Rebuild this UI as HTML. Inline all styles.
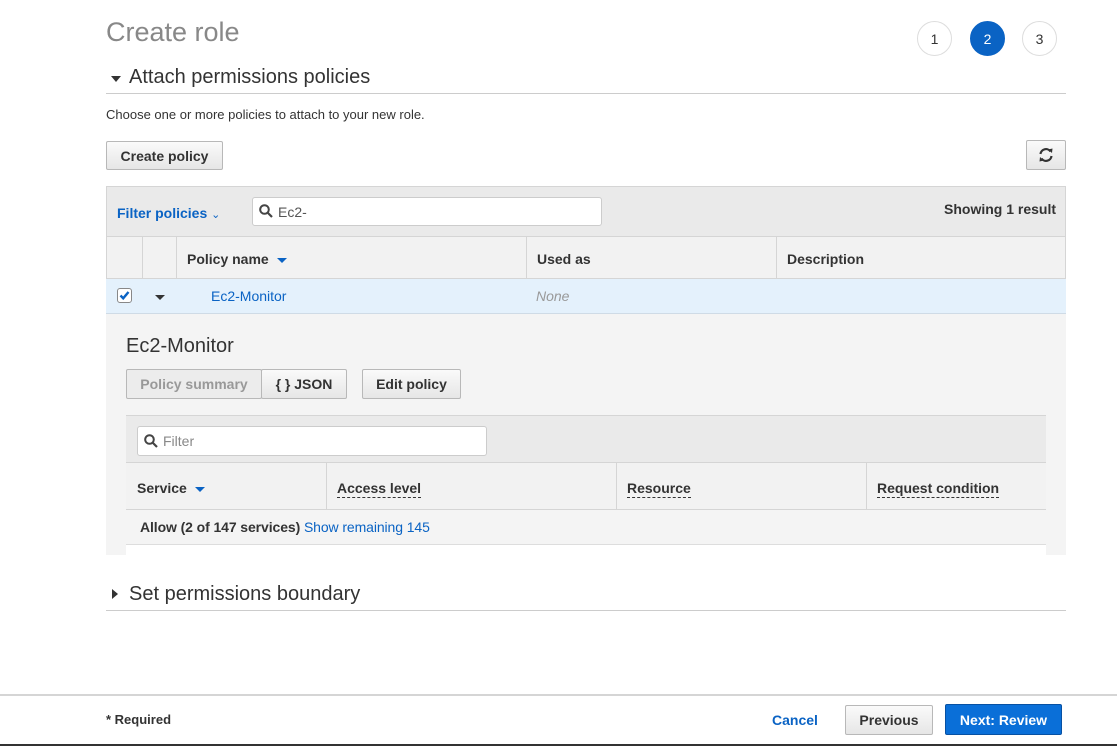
<!DOCTYPE html><html><head><style>
*{box-sizing:border-box;margin:0;padding:0}
body{width:1117px;height:746px;position:relative;background:#fff;font-family:"Liberation Sans",sans-serif;color:#333;overflow:hidden;font-size:13px}
.a{position:absolute}
.btn{position:absolute;border:1px solid #b8b8b8;border-radius:2px;background:linear-gradient(#fafafa,#e6e6e6);font-weight:bold;font-size:14px;color:#333;display:flex;align-items:center;justify-content:center}
.circ{position:absolute;width:35px;height:35px;border-radius:50%;border:1px solid #ddd;display:flex;align-items:center;justify-content:center;font-size:14px;top:21px}
.th{position:absolute;font-weight:bold;font-size:14px;color:#333}
.dot{border-bottom:1px dashed #333;padding-bottom:1px}
.vl{position:absolute;width:1px;background:#d5d5d5}
</style></head><body>
<div class="a" style="left:106px;top:17px;font-size:27px;color:#888">Create role</div>
<div class="circ" style="left:917px">1</div>
<div class="circ" style="left:970px;background:#0a63c4;border-color:#0a63c4;color:#fff">2</div>
<div class="circ" style="left:1022px">3</div>
<div class="a" style="left:111px;top:76px;width:0;height:0;border-left:5px solid transparent;border-right:5px solid transparent;border-top:6px solid #333"></div>
<div class="a" style="left:129px;top:66px;font-size:20px;color:#333">Attach permissions policies</div>
<div class="a" style="left:106px;top:93px;width:960px;height:1px;background:#ccc"></div>
<div class="a" style="left:106px;top:107px;font-size:13px">Choose one or more policies to attach to your new role.</div>
<div class="btn" style="left:106px;top:141px;width:117px;height:29px">Create policy</div>
<div class="btn" style="left:1026px;top:140px;width:40px;height:30px"><svg width="16" height="16" viewBox="0 0 16 16"><path d="M2.5 7A5.5 5.5 0 0 1 12.5 4.5M13.5 9A5.5 5.5 0 0 1 3.5 11.5" stroke="#333" stroke-width="2.2" fill="none"/><path d="M10 2.5L14.5 1.5L14 6Z M6 13.5L1.5 14.5L2 10Z" fill="#333"/></svg></div>
<div class="a" style="left:106px;top:186px;width:960px;height:51px;background:#eaeaea;border:1px solid #d5d5d5"></div>
<div class="a" style="left:117px;top:205px;color:#0a63c4;font-weight:bold;font-size:14px">Filter policies <span style="font-weight:normal;font-size:11px">&#8964;</span></div>
<div class="a" style="left:252px;top:197px;width:350px;height:29px;background:#fff;border:1px solid #ccc;border-radius:3px"></div>
<svg class="a" style="left:259px;top:204px" width="14" height="14" viewBox="0 0 14 14"><circle cx="5.5" cy="5.5" r="4.3" stroke="#444" stroke-width="2" fill="none"/><path d="M8.5 8.5L13 13" stroke="#444" stroke-width="2.2"/></svg>
<div class="a" style="left:278px;top:204px;font-size:14px;color:#555">Ec2-</div>
<div class="a" style="left:944px;top:201px;font-weight:bold;font-size:14px">Showing 1 result</div>
<div class="a" style="left:106px;top:237px;width:960px;height:42px;background:#f2f2f2;border:1px solid #d5d5d5;border-top:none"></div>
<div class="vl" style="left:142px;top:237px;height:42px"></div>
<div class="vl" style="left:176px;top:237px;height:42px"></div>
<div class="vl" style="left:526px;top:237px;height:42px"></div>
<div class="vl" style="left:776px;top:237px;height:42px"></div>
<div class="th" style="left:187px;top:251px">Policy name <span style="display:inline-block;margin-left:4px;border-left:5px solid transparent;border-right:5px solid transparent;border-top:5px solid #0a63c4;vertical-align:middle"></span></div>
<div class="th" style="left:537px;top:251px">Used as</div>
<div class="th" style="left:787px;top:251px">Description</div>
<div class="a" style="left:106px;top:279px;width:960px;height:35px;background:#e4f1fc;border-bottom:1px solid #cfdbe6"></div>
<div class="a" style="left:117px;top:288px;width:15px;height:15px;background:#fff;border:1px solid #888;border-radius:3px"><svg width="13" height="13" viewBox="0 0 13 13" style="display:block"><path d="M2.5 6.5L5.2 9.3L10.5 3" stroke="#0a63c4" stroke-width="2.4" fill="none"/></svg></div>
<div class="a" style="left:155px;top:295px;border-left:5px solid transparent;border-right:5px solid transparent;border-top:5px solid #333"></div>
<div class="a" style="left:211px;top:288px;color:#0a63c4;font-size:14px">Ec2-Monitor</div>
<div class="a" style="left:536px;top:288px;color:#999;font-style:italic;font-size:14px">None</div>
<div class="a" style="left:106px;top:314px;width:960px;height:241px;background:#f4f4f4"></div>
<div class="a" style="left:126px;top:335px;font-size:20px;color:#333">Ec2-Monitor</div>
<div class="btn" style="left:126px;top:369px;width:136px;height:30px;color:#999;background:#ececec">Policy summary</div>
<div class="btn" style="left:261px;top:369px;width:86px;height:30px">{ } JSON</div>
<div class="btn" style="left:362px;top:369px;width:99px;height:30px">Edit policy</div>
<div class="a" style="left:126px;top:415px;width:920px;height:47px;background:#eaeaea;border-top:1px solid #d5d5d5"></div>
<div class="a" style="left:137px;top:426px;width:350px;height:30px;background:#fff;border:1px solid #ccc;border-radius:3px"></div>
<svg class="a" style="left:144px;top:434px" width="14" height="14" viewBox="0 0 14 14"><circle cx="5.5" cy="5.5" r="4.3" stroke="#444" stroke-width="2" fill="none"/><path d="M8.5 8.5L13 13" stroke="#444" stroke-width="2.2"/></svg>
<div class="a" style="left:163px;top:433px;font-size:14px;color:#888">Filter</div>
<div class="a" style="left:126px;top:462px;width:920px;height:48px;background:#f2f2f2;border-top:1px solid #d5d5d5;border-bottom:1px solid #d5d5d5"></div>
<div class="vl" style="left:326px;top:462px;height:48px"></div>
<div class="vl" style="left:616px;top:462px;height:48px"></div>
<div class="vl" style="left:866px;top:462px;height:48px"></div>
<div class="th" style="left:137px;top:480px">Service <span style="display:inline-block;margin-left:4px;border-left:5px solid transparent;border-right:5px solid transparent;border-top:5px solid #0a63c4;vertical-align:middle"></span></div>
<div class="th" style="left:337px;top:480px"><span class="dot">Access level</span></div>
<div class="th" style="left:627px;top:480px"><span class="dot">Resource</span></div>
<div class="th" style="left:877px;top:480px"><span class="dot">Request condition</span></div>
<div class="a" style="left:126px;top:510px;width:920px;height:35px;background:#f4f4f4;border-bottom:1px solid #ddd"></div>
<div class="a" style="left:140px;top:519px;font-size:14px;letter-spacing:-0.1px"><b>Allow (2 of 147 services)</b> <span style="color:#0a63c4">Show remaining 145</span></div>
<div class="a" style="left:126px;top:545px;width:920px;height:10px;background:#fff"></div>
<div class="a" style="left:112px;top:589px;border-top:5px solid transparent;border-bottom:5px solid transparent;border-left:6px solid #333"></div>
<div class="a" style="left:129px;top:583px;font-size:20px">Set permissions boundary</div>
<div class="a" style="left:106px;top:610px;width:960px;height:1px;background:#ccc"></div>
<div class="a" style="left:0;top:694px;width:1117px;height:2px;background:#d5d5d5"></div>
<div class="a" style="left:106px;top:712px;font-weight:bold;font-size:13px">* Required</div>
<div class="a" style="left:772px;top:712px;color:#0a63c4;font-weight:bold;font-size:14px">Cancel</div>
<div class="btn" style="left:845px;top:705px;width:88px;height:30px">Previous</div>
<div class="btn" style="left:945px;top:704px;width:117px;height:31px;background:#0a6fd8;border-color:#0751a3;color:#fff">Next: Review</div>
<div class="a" style="left:0;top:744px;width:1117px;height:2px;background:#333"></div>
</body></html>
